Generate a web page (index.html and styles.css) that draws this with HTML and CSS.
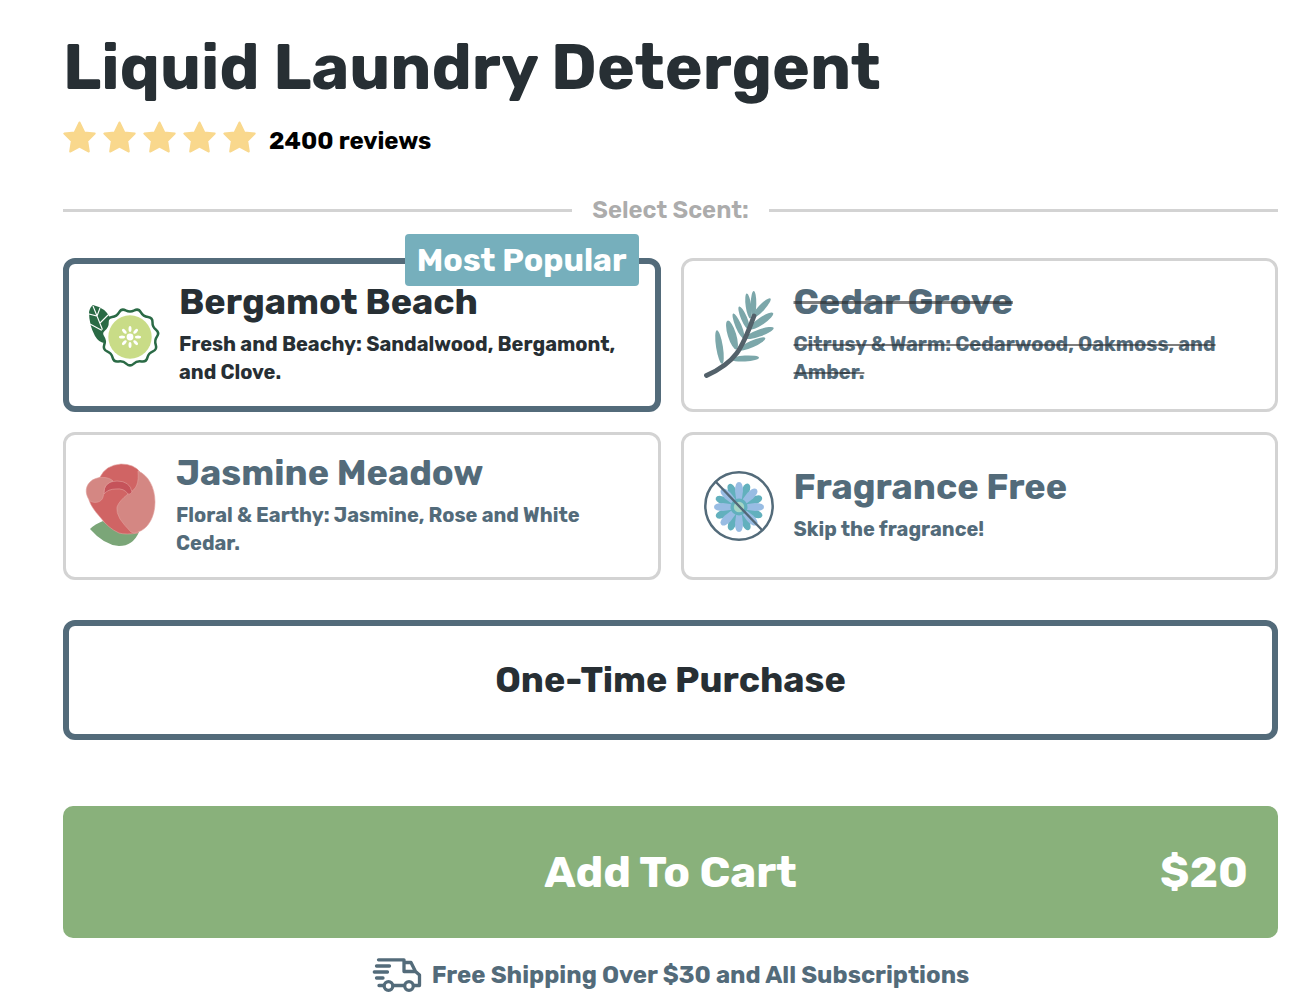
FILE: index.html
```html
<!DOCTYPE html>
<html lang="en">
<head>
  <meta charset="UTF-8" />
  <meta name="viewport" content="width=device-width, initial-scale=1.0" />
  <title>Liquid Laundry Detergent</title>
  <link rel="stylesheet" href="styles.css">
</head>

<body>
  <main class="product">
    <h1>Liquid Laundry Detergent</h1>

    <div class="rating">
      <svg class="stars" viewBox="0 0 194 34" role="img" aria-label="5 out of 5 stars">
        <defs>
          <path id="star" d="M16.5 1.5 L21.3 11.4 L31.7 12.6 L24.2 20 L25.8 30.5 L16.5 25.7 L7.2 30.5 L8.8 20 L1.3 12.6 L11.7 11.4 Z" />
        </defs>
        <use href="#star" />
        <use href="#star" x="40" />
        <use href="#star" x="80" />
        <use href="#star" x="120" />
        <use href="#star" x="160" />
      </svg>
      <span class="reviews">2400 reviews</span>
    </div>

    <form class="options">
      <div class="divider" id="scentLabel">Select Scent:</div>

      <div class="scents" role="radiogroup" aria-labelledby="scentLabel">
        <label class="scent">
          <input type="radio" name="scent" value="bergamot" checked>
          <span class="badge">Most Popular</span>
          <svg class="icon" viewBox="0 0 70 60" aria-hidden="true">
            <path fill="#2a6a45" d="M4 0 Q17 3 21 13 L17 20 L16 38 Q10 38 6 31 Q0 20 0 7 Q1 2 4 0 Z" />
            <path fill="none" stroke="#fff" stroke-width="1.1" d="M4 1 L14 26 M11 3 L8 11 L0 9 M19 10 L11 18 M14 26 L1 19" />
            <path fill="#fff" stroke="#2a6a45" stroke-width="2.5" stroke-linejoin="round" d="M44.5 58.8 Q47.9 55.5 52.6 56.4 Q57.2 57.2 58.4 52.6 Q59.5 48 63.9 46.3 Q68.3 44.5 66.8 40 Q65.2 35.5 68 31.6 Q70.7 27.7 67 24.8 Q63.3 21.8 63.5 17.1 Q63.7 12.4 59 11.9 Q54.2 11.4 51.9 7.3 Q49.5 3.2 45.3 5.4 Q41 7.5 36.7 5.4 Q32.5 3.2 30.1 7.3 Q27.8 11.4 23 11.9 Q18.3 12.4 18.5 17.1 Q18.7 21.8 15 24.8 Q11.3 27.7 14 31.6 Q16.8 35.5 15.2 40 Q13.7 44.5 18.1 46.3 Q22.5 48 23.6 52.6 Q24.8 57.2 29.4 56.4 Q34.1 55.5 37.5 58.8 Q41 62 44.5 58.8 Z" />
            <circle cx="41" cy="32" r="21.7" fill="#c9dc87" />
            <g fill="#fff">
              <circle cx="41" cy="32" r="3.4" />
              <g id="seeds">
                <ellipse cx="41" cy="24" rx="1.5" ry="3" />
                <ellipse cx="41" cy="40" rx="1.5" ry="3" />
                <ellipse cx="33" cy="32" rx="3" ry="1.5" />
                <ellipse cx="49" cy="32" rx="3" ry="1.5" />
              </g>
              <use href="#seeds" transform="rotate(45 41 32)" />
            </g>
          </svg>
          <span class="text">
            <span class="name">Bergamot Beach</span>
            <span class="desc">Fresh and Beachy: Sandalwood, Bergamont, and Clove.</span>
          </span>
        </label>

        <label class="scent">
          <input type="radio" name="scent" value="cedar" disabled>
          <svg class="icon" viewBox="0 0 70 88" aria-hidden="true">
            <g fill="#7ca7aa">
              <ellipse cx="15.5" cy="56" rx="17" ry="3.4" transform="rotate(81 15.5 56)" />
              <ellipse cx="28" cy="44" rx="15" ry="4.2" transform="rotate(73 28 44)" />
              <ellipse cx="34.5" cy="35" rx="13.5" ry="3" transform="rotate(67 34.5 35)" />
              <ellipse cx="40" cy="27" rx="12.5" ry="3" transform="rotate(67 40 27)" />
              <ellipse cx="44.5" cy="15" rx="12.5" ry="2.8" transform="rotate(82 44.5 15)" />
              <ellipse cx="49.5" cy="13" rx="13" ry="2.8" transform="rotate(91 49.5 13)" />
              <ellipse cx="57.5" cy="17" rx="13" ry="3.2" transform="rotate(-47 57.5 17)" />
              <ellipse cx="57.5" cy="30" rx="14" ry="3.6" transform="rotate(-34 57.5 30)" />
              <ellipse cx="55.5" cy="42" rx="15" ry="3.4" transform="rotate(-20 55.5 42)" />
              <ellipse cx="48" cy="53" rx="14.5" ry="3.4" transform="rotate(-24 48 53)" />
              <ellipse cx="41" cy="67.5" rx="14" ry="3" transform="rotate(-3 41 67.5)" />
            </g>
            <path fill="none" stroke="#53616a" stroke-width="4.8" stroke-linecap="round" d="M2.5 84.5 C32 71 38 58 50 25" />
          </svg>
          <span class="text">
            <span class="name">Cedar Grove</span>
            <span class="desc">Citrusy &amp; Warm: Cedarwood, Oakmoss, and Amber.</span>
          </span>
        </label>

        <label class="scent">
          <input type="radio" name="scent" value="jasmine">
          <svg class="icon" viewBox="0 0 70 84" aria-hidden="true">
            <path fill="#7ba678" d="M4 65 Q9 60 17 57 Q30 70 53 68 Q47 82 33 82 Q18 81 4 65 Z" />
            <g stroke="#e2a19e" stroke-width="0.6">
              <path fill="#d06464" d="M14 13 Q20 1 35 0 Q48 0 54 8 L52 69 Q40 71 33 69 Q22 64 14 53 Q5 43 3 36 Z" />
              <path fill="#d48783" d="M52 7 C62 11 69 23 69 38 C69 53 62 65 52 68 Q48 70 45 68 Q38 61 34 55 Q30 48 31 43 Q33 37 42 30 C51 25 53 19 52 7 Z" />
              <path fill="#c5535a" d="M18 30 Q17 17 31 17 Q44 17 46 28 Q44 31 42 30 Q38 24 30 25 Q22 25 18 30 Z" />
              <path fill="#d48783" d="M27 17 C22 12 10 12 4 18 C-2 24 0 32 4 37 C9 40 16 38 17 33 C19 27 16 21 27 17 Z" />
            </g>
          </svg>
          <span class="text">
            <span class="name">Jasmine Meadow</span>
            <span class="desc">Floral &amp; Earthy: Jasmine, Rose and White Cedar.</span>
          </span>
        </label>

        <label class="scent">
          <input type="radio" name="scent" value="free">
          <svg class="icon" viewBox="0 0 70 70" aria-hidden="true">
            <defs>
              <path id="petal" d="M33 34 L31 20 Q31 11 35 11 Q39 11 39 20 L37 34 Z" />
              <g id="petals">
                <use href="#petal" />
                <use href="#petal" transform="rotate(45 35 36)" />
                <use href="#petal" transform="rotate(90 35 36)" />
                <use href="#petal" transform="rotate(135 35 36)" />
                <use href="#petal" transform="rotate(180 35 36)" />
                <use href="#petal" transform="rotate(225 35 36)" />
                <use href="#petal" transform="rotate(270 35 36)" />
                <use href="#petal" transform="rotate(315 35 36)" />
              </g>
            </defs>
            <use href="#petals" fill="#62b0bd" transform="rotate(22 35 36)" />
            <use href="#petals" fill="#98bce3" />
            <circle cx="35" cy="36" r="8.5" fill="#62b0bd" />
            <circle cx="35" cy="36" r="5.2" fill="#a5d5c5" />
            <path stroke="#536878" stroke-width="2.4" d="M11 10 L58 59" />
            <circle cx="35" cy="35" r="33.7" fill="none" stroke="#536b7a" stroke-width="2.5" />
          </svg>
          <span class="text">
            <span class="name">Fragrance Free</span>
            <span class="desc">Skip the fragrance!</span>
          </span>
        </label>
      </div>

      <button type="button" class="purchase">One-Time Purchase</button>

      <button type="submit" class="cart">
        <span class="cartText">Add To Cart</span>
        <span class="price">$20</span>
      </button>
    </form>

    <p class="shipping">
      <svg class="truck" viewBox="0 0 49 34" aria-hidden="true">
        <g fill="none" stroke="#536b7a" stroke-width="3.3" stroke-linecap="round" stroke-linejoin="round">
          <path d="M6 1.8 H31.5 V13.5 H43 M31.5 4.5 H38.5 L43 13.5 L47 17 V27.5 H42 M31 27.5 H21.5 M6.5 27.5 H11 M4 8 H17 M1.8 14 H15 M4 20 H10.5" />
          <circle cx="16" cy="28" r="4.3" />
          <circle cx="36.5" cy="28" r="4.3" />
        </g>
      </svg>
      Free Shipping Over $30 and All Subscriptions
    </p>
  </main>
</body>
</html>
```
FILE: styles.css
```css
* {
  box-sizing: border-box;
  margin: 0;
  padding: 0;
}

body {
  font-family: Rubik, Inter, Roboto, sans-serif;
  font-weight: 700;
  background-color: white;
  color: #536b7a;
}

.product {
  padding: 32px 18px 0 63px;
}

h1 {
  color: #272f34;
  font-size: 64px;
  line-height: 70px;
  font-weight: 700;
}

.rating {
  display: flex;
  align-items: flex-start;
  gap: 12px;
  margin-top: 19px;
  color: black;
  font-size: 24px;
  line-height: 40px;
}

.stars {
  width: 194px;
  height: 34px;
  fill: #f9d88d;
  stroke: #f9d88d;
  stroke-width: 2;
  stroke-linejoin: round;
}

.divider {
  display: flex;
  align-items: center;
  gap: 20px;
  margin: 35px 0 34px;
  color: #acacac;
  font-size: 24px;
  line-height: 28px;
  font-weight: 600;
}

.divider::before,
.divider::after {
  content: "";
  flex: 1;
  height: 3px;
  background-color: #d3d3d3;
}

.scents {
  display: grid;
  grid-template-columns: 1fr 1fr;
  gap: 20px;
}

.scent {
  position: relative;
  display: flex;
  align-items: center;
  gap: 20px;
  padding: 20px;
  border: 3px solid #d3d3d3;
  border-radius: 12px;
  cursor: pointer;
}

.scent input {
  position: absolute;
  opacity: 0;
}

.scent:has(input:checked) {
  border: 6px solid #536b7a;
  color: #272f34;
}

.scent:has(input:disabled) {
  cursor: not-allowed;
}

.scent:has(input:disabled) .name,
.scent:has(input:disabled) .desc {
  text-decoration: line-through;
  text-decoration-color: rgba(40, 40, 40, 0.6);
}

.icon {
  flex: none;
  width: 70px;
  overflow: visible;
}

.name {
  display: block;
  margin-bottom: 10px;
  font-size: 36px;
  line-height: 36px;
}

.desc {
  display: block;
  font-size: 20px;
  line-height: 28px;
}

.badge {
  position: absolute;
  top: -30px;
  right: 16px;
  padding: 6px 12px;
  border-radius: 4px;
  background-color: #76afbc;
  color: white;
  font-size: 32px;
  line-height: 40px;
}

button {
  display: block;
  width: 100%;
  font-family: inherit;
  font-weight: 700;
  border-radius: 12px;
  cursor: pointer;
}

.purchase {
  margin-top: 40px;
  padding: 34px;
  border: 6px solid #536b7a;
  background-color: white;
  color: #272f34;
  font-size: 36px;
  line-height: 40px;
}

.cart {
  display: grid;
  grid-template-columns: 1fr auto 1fr;
  align-items: center;
  margin-top: 66px;
  padding: 42px 30px;
  border: none;
  border-radius: 10px;
  background-color: #89b17b;
  color: white;
  font-size: 44px;
  line-height: 48px;
}

.cartText {
  grid-column: 2;
}

.price {
  text-align: right;
}

.shipping {
  display: flex;
  align-items: center;
  justify-content: center;
  gap: 10px;
  margin-top: 20px;
  font-size: 24px;
  line-height: 34px;
}

.truck {
  width: 50px;
  height: 34px;
}

@media (max-width: 768px) {
  .product {
    padding: 24px 16px;
  }

  h1 {
    font-size: 36px;
    line-height: 40px;
  }

  .scents {
    grid-template-columns: 1fr;
  }
}
```
